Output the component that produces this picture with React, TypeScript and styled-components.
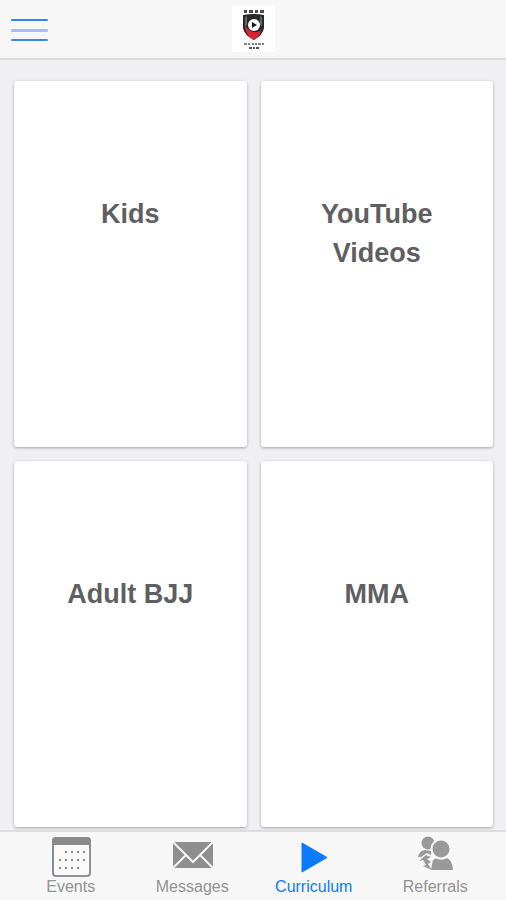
import React from "react";
import styled, { createGlobalStyle } from "styled-components";

const GlobalStyle = createGlobalStyle`
  *, *::before, *::after { box-sizing: border-box; }
  body {
    margin: 0;
    background: #efeff4;
    font-family: "Liberation Sans", Helvetica, Arial, sans-serif;
  }
`;

const Screen = styled.div`
  display: flex;
  flex-direction: column;
  min-height: 100vh;
`;

const Header = styled.header`
  display: grid;
  grid-template-columns: 1fr auto 1fr;
  align-items: center;
  height: 60px;
  padding: 0 10px;
  background: #f7f7f7;
  border-bottom: 2px solid #dcdcdf;
`;

const MenuButton = styled.button`
  display: flex;
  justify-self: start;
  padding: 0;
  border: 0;
  background: none;
  cursor: pointer;
`;

const LogoLink = styled.a`
  display: flex;
  background: #ffffff;
  border-radius: 2px;
`;

const CardGrid = styled.main`
  flex: 1;
  display: grid;
  grid-template-columns: 1fr 1fr;
  grid-auto-rows: 1fr;
  gap: 14px;
  padding: 21px 13px 3px 14px;
`;

const Card = styled.a`
  padding: 114px 32px 32px;
  background: #ffffff;
  border-radius: 3px;
  box-shadow: 0 1px 3px rgba(0, 0, 0, 0.32);
  color: #5f5f62;
  text-align: center;
  text-decoration: none;
`;

const CardTitle = styled.h2`
  margin: 0;
  font-size: 27px;
  line-height: 39px;
  font-weight: 700;
`;

const TabBar = styled.nav`
  position: sticky;
  bottom: 0;
  display: grid;
  grid-template-columns: repeat(4, 1fr);
  height: 70px;
  padding: 0 10px;
  background: #f7f7f7;
  border-top: 2px solid #dedee0;
`;

const Tab = styled.a<{ $active?: boolean }>`
  display: flex;
  flex-direction: column;
  align-items: center;
  padding-top: 4px;
  color: ${({ $active }) => ($active ? "#0a7aff" : "#929292")};
  font-size: 16px;
  line-height: 18px;
  text-decoration: none;
`;

const TabIcon = styled.svg`
  display: block;
  width: 44px;
  height: 42px;
`;

const MenuIcon = () => (
  <svg width="39" height="28" viewBox="0 0 39 28" aria-hidden="true">
    <rect x="1" y="4" width="37" height="2" rx="1" fill="#2e86f2" />
    <rect x="1" y="14" width="37" height="3" rx="1" fill="#a3bcfa" />
    <rect x="1" y="24" width="37" height="2" rx="1" fill="#3c8be0" />
  </svg>
);

const Logo = () => (
  <svg width="43" height="46" viewBox="0 0 43 46" aria-hidden="true">
    <path d="M12 4h3v3h-3zM17 4h4v3h-4zM23 4h3v3h-3zM28 4h4v3h-4z" fill="#4c4c4c" />
    <path d="M11 9Q22 7 32 9V22Q31 29 22 34Q12 29 11 22Z" fill="#292929" />
    <path d="M13 11l2-1v9l-2 1zM28 10l2 1v9l-2-1z" fill="#666" />
    <path d="M13 19Q16 25 22 26Q26 27 29 24Q28 30 22 34Q13 30 13 19Z" fill="#dc2430" />
    <circle cx="22" cy="19" r="6" fill="#fff" />
    <path d="M20 16L25 19L20 22Z" fill="#151515" />
    <path d="M12 38h3m1 0h2m2 0h2m1 0h2m1 0h3m1 0h2" stroke="#808080" strokeWidth="2" />
    <path d="M17 42h3m1 0h2m1 0h3" stroke="#555" strokeWidth="2" />
  </svg>
);

const dots = [
  [16, 16], [22, 16], [28, 16], [34, 16],
  [10, 24], [16, 24], [22, 24], [28, 24], [34, 24],
  [10, 32], [16, 32], [22, 32], [28, 32],
];

const CalendarIcon = () => (
  <TabIcon viewBox="0 0 44 42" aria-hidden="true">
    <rect x="4" y="2" width="37" height="38" rx="3" fill="#fafafa" stroke="#929292" strokeWidth="2" />
    <path d="M3 9V5Q3 1 7 1H38Q42 1 42 5V9Z" fill="#8b8b8b" />
    <path d="M4 9V38" stroke="#7185bd" strokeWidth="1" />
    {dots.map(([x, y]) => (
      <rect key={`${x}-${y}`} x={x} y={y - 1} width="2" height="2" fill="#858585" />
    ))}
  </TabIcon>
);

const MailIcon = () => (
  <TabIcon viewBox="0 0 44 42" aria-hidden="true">
    <rect x="3" y="6" width="40" height="26" fill="#8e8e8e" />
    <path d="M3 6L23 26L43 6M3 32L16 19M43 32L30 19" fill="none" stroke="#f7f7f7" strokeWidth="2" />
  </TabIcon>
);

const PlayIcon = () => (
  <TabIcon viewBox="0 0 44 42" aria-hidden="true">
    <path d="M10 7L35 21.5L10 36Z" fill="#0a7aff" stroke="#0a7aff" strokeWidth="1" strokeLinejoin="round" />
  </TabIcon>
);

const ReferralsIcon = () => (
  <TabIcon viewBox="0 0 44 42" aria-hidden="true">
    <g fill="#999">
      <circle cx="15" cy="7" r="6.5" />
      <path d="M5 21Q6 15 12 14L18 15V19L14 17L8 21Z" />
      <path d="M18 34L20 24L24 22Q29 25 34 22Q39 24 40 34Z" />
      <circle cx="28" cy="13" r="9.5" stroke="#f7f7f7" strokeWidth="2" />
      <path d="M6 25L13 19L18 21L14 23L18 26L15 28L19 34L10 30L13 29L10 24Z" />
    </g>
  </TabIcon>
);

const cards = ["Kids", "YouTube Videos", "Adult BJJ", "MMA"];

const tabs = [
  { label: "Events", Icon: CalendarIcon },
  { label: "Messages", Icon: MailIcon },
  { label: "Curriculum", Icon: PlayIcon, active: true },
  { label: "Referrals", Icon: ReferralsIcon },
];

export default function App() {
  return (
    <>
      <GlobalStyle />
      <Screen>
        <Header>
          <MenuButton type="button" aria-label="Open menu">
            <MenuIcon />
          </MenuButton>
          <LogoLink href="#home" aria-label="Home">
            <Logo />
          </LogoLink>
        </Header>
        <CardGrid>
          {cards.map((title) => (
            <Card key={title} href="#curriculum">
              <CardTitle>{title}</CardTitle>
            </Card>
          ))}
        </CardGrid>
        <TabBar aria-label="Main">
          {tabs.map(({ label, Icon, active }) => (
            <Tab
              key={label}
              href={`#${label.toLowerCase()}`}
              $active={active}
              aria-current={active ? "page" : undefined}
            >
              <Icon />
              {label}
            </Tab>
          ))}
        </TabBar>
      </Screen>
    </>
  );
}
